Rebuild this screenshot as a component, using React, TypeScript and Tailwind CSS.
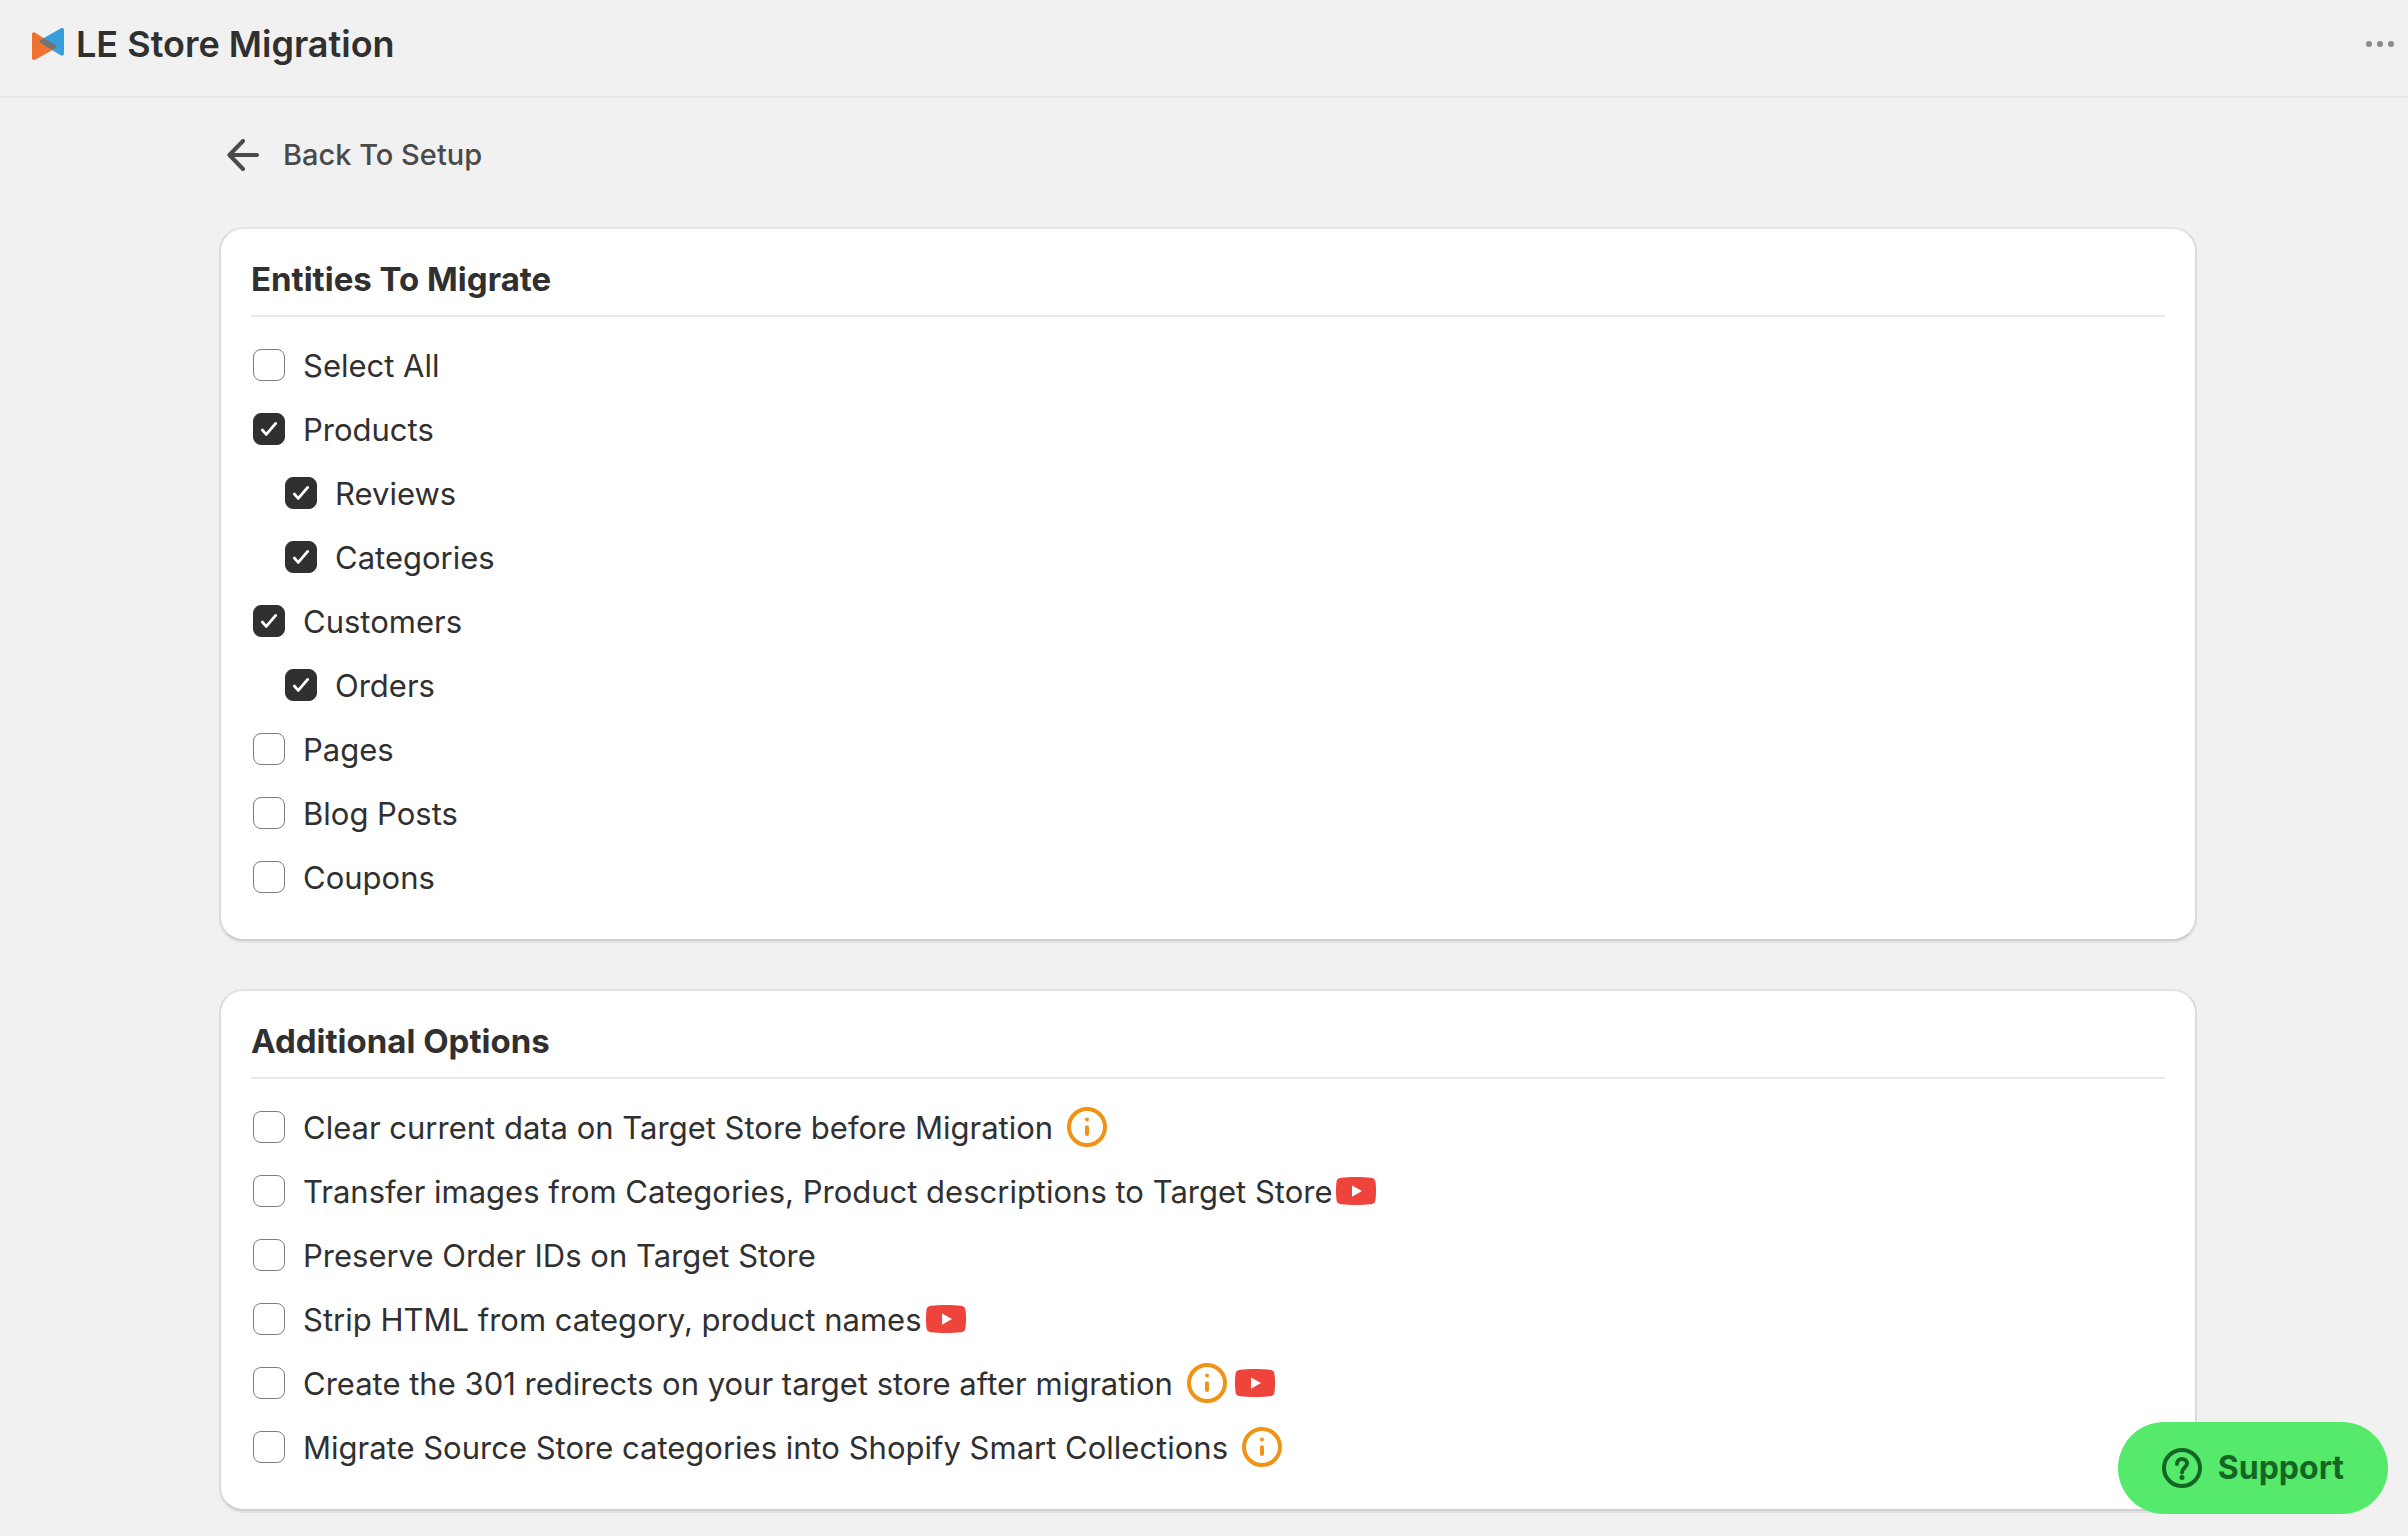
import { useState } from "react";

type Entity = { id: string; label: string; nested?: boolean; checked?: boolean };
type Option = { id: string; label: string; info?: boolean; video?: boolean };

const entities: Entity[] = [
  { id: "all", label: "Select All" },
  { id: "products", label: "Products", checked: true },
  { id: "reviews", label: "Reviews", nested: true, checked: true },
  { id: "categories", label: "Categories", nested: true, checked: true },
  { id: "customers", label: "Customers", checked: true },
  { id: "orders", label: "Orders", nested: true, checked: true },
  { id: "pages", label: "Pages" },
  { id: "posts", label: "Blog Posts" },
  { id: "coupons", label: "Coupons" },
];

const options: Option[] = [
  { id: "clear", label: "Clear current data on Target Store before Migration", info: true },
  { id: "images", label: "Transfer images from Categories, Product descriptions to Target Store", video: true },
  { id: "order-ids", label: "Preserve Order IDs on Target Store" },
  { id: "strip", label: "Strip HTML from category, product names", video: true },
  { id: "redirects", label: "Create the 301 redirects on your target store after migration", info: true, video: true },
  { id: "smart", label: "Migrate Source Store categories into Shopify Smart Collections", info: true },
];

function Logo() {
  return (
    <svg viewBox="0 0 32 32" className="size-8" aria-hidden="true">
      <path d="M0 6.5C0 4.6 1.6 3.8 3.2 4.8L23.2 17.2C24.6 18.1 24.6 19.6 23.2 20.4L3.6 31.4C1.8 32.4 0 31.8 0 29.8Z" fill="#f07230" />
      <path d="M32 2.2C32 .2 30.3-.5 28.6.5L8.8 11.7C7.4 12.5 7.4 14 8.8 14.9L28.6 27.2C30.3 28.2 32 27.4 32 25.6Z" fill="#369fda" />
      <path d="M12.6 10.2L23.2 17.2C24.6 18.1 24.6 19.6 23.2 20.4L20.4 21.9L8.8 14.9C7.4 14 7.4 12.5 8.8 11.9Z" fill="#79716f" />
    </svg>
  );
}

function InfoIcon() {
  return (
    <svg viewBox="0 0 40 40" className="size-10" fill="none" aria-hidden="true">
      <circle cx="20" cy="20" r="18" stroke="#f09418" strokeWidth="4" />
      <circle cx="20" cy="12.6" r="2" fill="#f09418" />
      <path d="M20 20.2V27" stroke="#f09418" strokeWidth="4" strokeLinecap="round" />
    </svg>
  );
}

function VideoIcon() {
  return (
    <svg viewBox="0 0 40 28" className="h-7 w-10" aria-hidden="true">
      <path
        d="M5 .7C13 -.2 27 -.2 35 .7C37.8 1 39.2 2.4 39.5 5C40.2 11 40.2 17 39.5 23C39.2 25.6 37.8 27 35 27.3C27 28.2 13 28.2 5 27.3C2.2 27 .8 25.6 .5 23C-.2 17-.2 11 .5 5C.8 2.4 2.2 1 5 .7Z"
        fill="#ef443b"
      />
      <path d="M16 8.4L26 14L16 19.8Z" fill="#fff" />
    </svg>
  );
}

function CheckRow({ id, label, nested, checked, info, video }: Entity & Option) {
  const [on, setOn] = useState(Boolean(checked));
  return (
    <li className={nested ? "flex h-16 items-center pl-8" : "flex h-16 items-center"}>
      <span className="relative flex size-8 shrink-0">
        <input
          id={id}
          type="checkbox"
          checked={on}
          onChange={(e) => setOn(e.target.checked)}
          className="peer size-8 appearance-none rounded-lg border border-[#7d7d7d] bg-white checked:border-[#303030] checked:bg-[#303030]"
        />
        <svg
          viewBox="0 0 32 32"
          className="pointer-events-none absolute inset-0 size-8 opacity-0 peer-checked:opacity-100"
          fill="none"
          stroke="#fff"
          strokeWidth="2.8"
          strokeLinecap="round"
          strokeLinejoin="round"
          aria-hidden="true"
        >
          <path d="M9.300 17L13.300 21.400L22.700 10.400" />
        </svg>
      </span>
      <label htmlFor={id} className="pt-0.5 pl-[18px]">
        {label}
      </label>
      {info && (
        <button type="button" aria-label={`About: ${label}`} className="ml-3.5">
          <InfoIcon />
        </button>
      )}
      {video && (
        <a href="#video" aria-label={`Watch video: ${label}`} className={info ? "ml-2" : "ml-1"}>
          <VideoIcon />
        </a>
      )}
    </li>
  );
}

function Card({ title, rows }: { title: string; rows: (Entity & Option)[] }) {
  return (
    <section className="rounded-3xl border-2 border-x-[#dcdcdc] border-t-[#e4e4e4] border-b-[#cfcfcf] bg-white px-[30px] pt-[30px] pb-[30px] shadow-[0_2px_0_0_#e2e2e2]">
      <h2 className="border-b-2 border-[#e8e8e8] pb-4 text-[33px] leading-10 font-bold">{title}</h2>
      <ul className="pt-4 pl-0.5 text-[31px] leading-10">
        {rows.map((row) => (
          <CheckRow key={row.id} {...row} />
        ))}
      </ul>
    </section>
  );
}

export default function App() {
  return (
    <div className="min-h-screen bg-[#f1f1f1] pb-6 font-['Inter',sans-serif] text-[#303030]">
      <header className="flex h-[98px] items-start justify-between border-b-2 border-[#e8e8e8] pt-5 pr-3.5 pl-8">
        <div className="flex h-12 items-center gap-3">
          <Logo />
          <h1 className="text-[36px] leading-[48px] font-semibold">LE Store Migration</h1>
        </div>
        <button type="button" aria-label="More actions" className="flex h-12 items-center gap-[5px]">
          <span className="size-1.5 rounded-full bg-[#8a8a8a]" />
          <span className="size-1.5 rounded-full bg-[#8a8a8a]" />
          <span className="size-1.5 rounded-full bg-[#8a8a8a]" />
        </button>
      </header>

      <main className="flex flex-col pr-[211px] pl-[219px]">
        <a href="#setup" className="mt-[37px] flex h-10 items-center gap-6 self-start pl-2 text-[29px] leading-10 font-medium text-[#4a4a4a]">
          <svg viewBox="0 0 32 32" className="size-8" fill="none" stroke="#4a4a4a" strokeWidth="4" strokeLinecap="round" strokeLinejoin="round" aria-hidden="true">
            <path d="M30 16H2.4M16 2L2.4 16L16 30" />
          </svg>
          Back To Setup
        </a>
        <div className="mt-[52px] flex flex-col gap-12">
          <Card title="Entities To Migrate" rows={entities} />
          <Card title="Additional Options" rows={options} />
        </div>
      </main>

      <button
        type="button"
        className="fixed right-5 bottom-[22px] flex h-[92px] items-center gap-4 rounded-full bg-[#55ea6b] px-11 text-[32px] leading-10 font-bold text-[#156624]"
      >
        <svg viewBox="0 0 40 40" className="size-10" fill="none" stroke="#156624" strokeWidth="4" aria-hidden="true">
          <circle cx="20" cy="20" r="18" />
          <path d="M15 16C15 9 25 9.500 25 15.500C25 19.500 20 19.500 20 24.600" strokeLinecap="round" strokeLinejoin="round" />
          <circle cx="20" cy="29.500" r="2.500" fill="#156624" stroke="none" />
        </svg>
        Support
      </button>
    </div>
  );
}
